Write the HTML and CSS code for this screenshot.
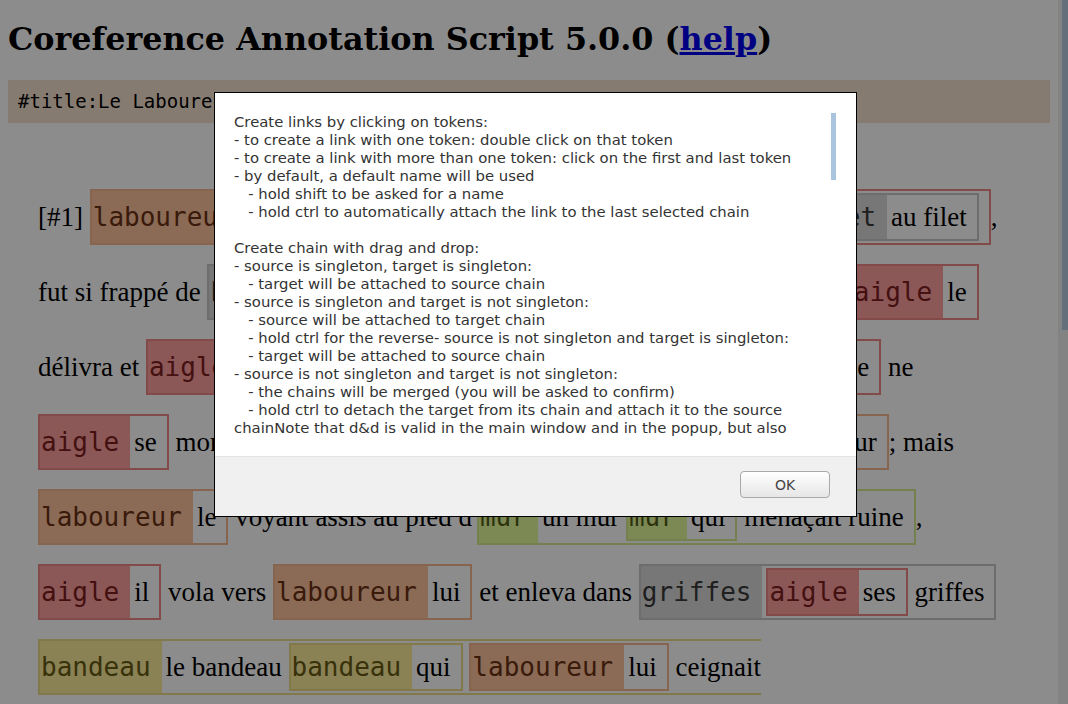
FILE: index.html
```html
<!DOCTYPE html>
<html lang="fr">
<head>
<meta charset="utf-8">
<title>Coreference Annotation Script</title>
<link rel="stylesheet" href="styles.css">
</head>
<body>
<div class="page">
  <h1 class="heading">Coreference Annotation Script 5.0.0 (<a href="#" class="help-link">help</a>)</h1>
  <div class="doc-title">#title:Le Laboureur et l'Aigle</div>
  <div class="text">
    <div class="line">[#1] <span class="m lab"><span class="lbl">laboureur</span><span class="cnt">Un laboureur</span></span>, ayant trouvé <span class="m aig"><span class="lbl">aigle</span><span class="cnt">un aigle pris <span class="m gri n"><span class="lbl">filet</span><span class="cnt">au filet</span></span></span></span>,</div>
    <div class="line">fut si frappé de <span class="m gri"><span class="lbl">beauté</span><span class="cnt"><span class="m aig n"><span class="lbl">aigle</span><span class="cnt">sa</span></span> grande beauté</span></span> qu'<span class="m lab"><span class="lbl">laboureur</span><span class="cnt">il</span></span> <span class="m aig"><span class="lbl">aigle</span><span class="cnt">le</span></span></div>
    <div class="line">délivra et <span class="m aig"><span class="lbl">aigle</span><span class="cnt">lui</span></span> donna bientôt la <span class="m gri"><span class="lbl">liberté</span><span class="cnt">liberté</span></span> . <span class="m aig"><span class="lbl">aigle</span><span class="cnt">L'aigle</span></span> ne</div>
    <div class="line"><span class="m aig"><span class="lbl">aigle</span><span class="cnt">se</span></span> montra pas ingrat envers <span class="m lab"><span class="lbl">laboureur</span><span class="cnt"><span class="m aig n"><span class="lbl">aigle</span><span class="cnt">son</span></span> bienfaiteur</span></span>; mais</div>
    <div class="line"><span class="m lab"><span class="lbl">laboureur</span><span class="cnt">le</span></span> voyant assis au pied d'<span class="m mur"><span class="lbl">mur</span><span class="cnt">un mur <span class="m mur n"><span class="lbl">mur</span><span class="cnt">qui</span></span> menaçait ruine</span></span>,</div>
    <div class="line"><span class="m aig"><span class="lbl">aigle</span><span class="cnt">il</span></span> vola vers <span class="m lab"><span class="lbl">laboureur</span><span class="cnt">lui</span></span> et enleva dans <span class="m gri"><span class="lbl">griffes</span><span class="cnt"><span class="m aig n"><span class="lbl">aigle</span><span class="cnt">ses</span></span> griffes</span></span></div>
    <div class="line"><span class="m ban open"><span class="lbl">bandeau</span><span class="cnt">le bandeau <span class="m ban n"><span class="lbl">bandeau</span><span class="cnt">qui</span></span> <span class="m lab n"><span class="lbl">laboureur</span><span class="cnt">lui</span></span> ceignait</span></span></div>
  </div>
</div>
<div class="vscroll"><div class="vscroll-thumb"></div></div>

<div class="overlay"></div>

<div class="dialog" role="dialog">
  <div class="dialog-body">
    <div class="help"><div class="help-text">Create links by clicking on tokens:
- to create a link with one token: double click on that token
- to create a link with more than one token: click on the first and last token
- by default, a default name will be used
   - hold shift to be asked for a name
   - hold ctrl to automatically attach the link to the last selected chain

Create chain with drag and drop:
- source is singleton, target is singleton:
   - target will be attached to source chain
- source is singleton and target is not singleton:
   - source will be attached to target chain
   - hold ctrl for the reverse- source is not singleton and target is singleton:
   - target will be attached to source chain
- source is not singleton and target is not singleton:
   - the chains will be merged (you will be asked to confirm)
   - hold ctrl to detach the target from its chain and attach it to the source
chainNote that d&amp;d is valid in the main window and in the popup, but also
between the main window and the popup.</div><div class="thumb"></div></div>
  </div>
  <div class="dialog-buttons">
    <button class="ok" type="button">OK</button>
  </div>
</div>
</body>
</html>
```

FILE: styles.css
```css
* { box-sizing: border-box; }

body {
  margin: 0;
  height: 100vh;
  overflow: hidden;
  display: flex;
  background: #fff;
  color: #000;
  font-family: "Liberation Serif", serif;
}

.page {
  flex: 1;
  min-width: 0;
  padding: 8px;
}

.vscroll {
  flex: 0 0 10px;
  background: #efefef;
}

.vscroll-thumb {
  height: 330px;
  margin-left: 4px;
  background: #b6cbe2;
}

.heading {
  margin: 12px 0 23px;
  font-family: "DejaVu Serif", serif;
  font-weight: bold;
  font-size: 31.8px;
}

.help-link { color: #0000ee; }

.doc-title {
  background: #f5e0cc;
  padding: 10px;
  font-family: "DejaVu Sans Mono", monospace;
  font-size: 19px;
  line-height: 23px;
}

.text {
  margin-top: 57px;
  padding-left: 30px;
}

.line {
  font-size: 27px;
  line-height: 75px;
  white-space: nowrap;
}

/* mentions */
.m {
  display: inline-block;
  line-height: 0;
  border: 2px solid;
  vertical-align: baseline;
  white-space: nowrap;
}

.lbl {
  display: inline-block;
  height: 52px;
  line-height: 52px;
  padding: 0 11px 0 1px;
  font-family: "DejaVu Sans Mono", monospace;
  font-size: 26px;
}

.cnt {
  display: inline-block;
  height: 52px;
  line-height: 52px;
  padding: 0 10px 0 4px;
  background: #fff;
  color: #000;
}

.n .lbl,
.n .cnt {
  height: 44px;
  line-height: 44px;
}

.open { border-right: 0; }
.open > .cnt { padding-right: 0; }

.lab { border-color: #f4b68c; }
.lab > .lbl { background: #fdc49c; color: #6a3014; }

.aig { border-color: #ee8888; }
.aig > .lbl { background: #ff9e9e; color: #7c1e1e; }

.gri { border-color: #c6c6c6; }
.gri > .lbl { background: #d9d9d9; color: #3a3a3a; }

.mur { border-color: #d4ec8e; }
.mur > .lbl { background: #e2fa9c; color: #4f5c16; }

.ban { border-color: #ecdc86; }
.ban > .lbl { background: #fbec9c; color: #665a12; }

/* modal */
.overlay {
  position: fixed;
  inset: 0;
  background: rgba(0, 0, 0, 0.45);
  z-index: 10;
}

.dialog {
  position: fixed;
  left: 214px;
  top: 92px;
  width: 643px;
  height: 425px;
  z-index: 11;
  display: flex;
  flex-direction: column;
  background: #fff;
  border: 1px solid #000;
  font-family: "DejaVu Sans", sans-serif;
}

.dialog-body {
  flex: 1;
  padding: 20px 20px 17px 19px;
}

.help {
  position: relative;
  height: 326px;
  overflow: hidden;
}

.help-text {
  white-space: pre;
  font-size: 14.85px;
  line-height: 18px;
  color: #333;
}

.thumb {
  position: absolute;
  top: 0;
  right: 0;
  width: 5px;
  height: 67px;
  background: #a9c4df;
}

.dialog-buttons {
  height: 60px;
  display: flex;
  justify-content: flex-end;
  align-items: flex-start;
  padding: 14px 26px 0 0;
  background: #f0f0f0;
  border-top: 1px solid #e4e4e4;
}

.ok {
  width: 90px;
  height: 27px;
  border: 1px solid #a9a9a9;
  border-radius: 4px;
  background: linear-gradient(#ffffff, #e6e6e6);
  font-family: "DejaVu Sans", sans-serif;
  font-size: 14px;
  color: #444;
}
```
